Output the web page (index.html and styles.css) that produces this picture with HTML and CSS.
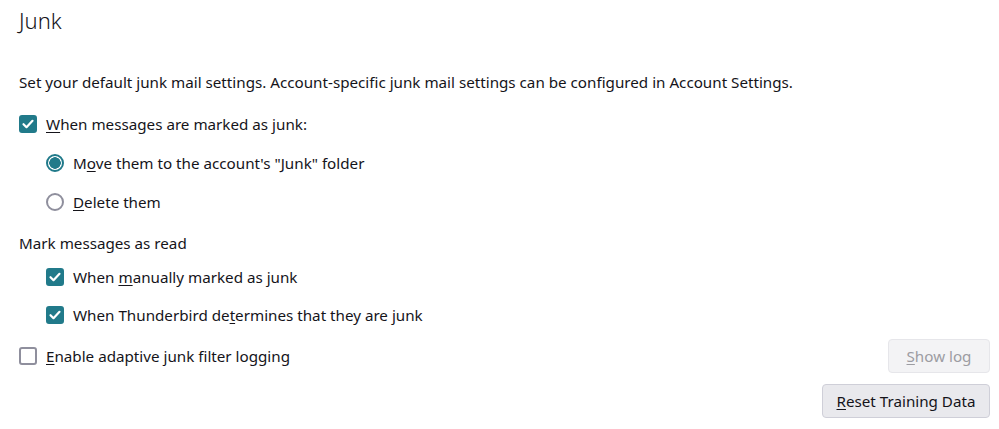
FILE: index.html
```html
<!DOCTYPE html>
<html>
<head>
<meta charset="utf-8">
<link rel="stylesheet" href="styles.css">
</head>
<body>
<div class="page">
  <h1 class="title">Junk</h1>
  <p class="desc">Set your default junk mail settings. Account-specific junk mail settings can be configured in Account Settings.</p>

  <div class="row first">
    <span class="cb checked"><svg viewBox="0 0 18 18"><path d="M4.5 9.2l3 3 6-6.4" /></svg></span>
    <span class="label"><u>W</u>hen messages are marked as junk:</span>
  </div>
  <div class="indent radios">
    <div class="row">
      <span class="radio checked"></span>
      <span class="label">M<u>o</u>ve them to the account's "Junk" folder</span>
    </div>
    <div class="row">
      <span class="radio"></span>
      <span class="label"><u>D</u>elete them</span>
    </div>
  </div>

  <div class="caption">Mark messages as read</div>
  <div class="indent">
    <div class="row">
      <span class="cb checked"><svg viewBox="0 0 18 18"><path d="M4.5 9.2l3 3 6-6.4" /></svg></span>
      <span class="label">When <u>m</u>anually marked as junk</span>
    </div>
    <div class="row">
      <span class="cb checked"><svg viewBox="0 0 18 18"><path d="M4.5 9.2l3 3 6-6.4" /></svg></span>
      <span class="label">When Thunderbird de<u>t</u>ermines that they are junk</span>
    </div>
  </div>

  <div class="row logrow">
    <span class="cb"></span>
    <span class="label"><u>E</u>nable adaptive junk filter logging</span>
    <button class="btn disabled"><u>S</u>how log</button>
  </div>
  <div class="btnrow">
    <button class="btn"><u>R</u>eset Training Data</button>
  </div>
</div>
</body>
</html>
```

FILE: styles.css
```css
html, body {
  margin: 0;
  padding: 0;
  background: #ffffff;
}
body {
  font-family: "Noto Sans", "Open Sans", sans-serif;
  font-size: 15.2px;
  color: #15141a;
}
.page {
  padding: 4px 9px 0 19px;
}
.title {
  margin: 0;
  font-size: 22px;
  font-weight: 300;
  line-height: 32px;
  color: #15141a;
}
.desc {
  margin: 35px 0 0 0;
  line-height: 22px;
}
.row {
  display: flex;
  align-items: center;
  height: 38px;
}
.row.first {
  margin-top: 12px;
}
.indent {
  padding-left: 27px;
}
.radios {
  margin-top: 1px;
}
.indent .row + .row {
  margin-top: 0.5px;
}
u {
  text-decoration-thickness: 1px;
  text-underline-offset: 2px;
}
.cb {
  box-sizing: border-box;
  width: 18px;
  height: 18px;
  border: 2px solid #8f8f9d;
  border-radius: 3px;
  margin-right: 9px;
  flex: none;
  display: flex;
  align-items: center;
  justify-content: center;
}
.cb.checked {
  background: #217a8a;
  border-color: #217a8a;
}
.cb svg {
  width: 18px;
  height: 18px;
  flex: none;
}
.cb svg path {
  fill: none;
  stroke: #ffffff;
  stroke-width: 2.2;
  stroke-linecap: round;
  stroke-linejoin: round;
}
.radio {
  box-sizing: border-box;
  width: 18px;
  height: 18px;
  border: 2px solid #8f8f9d;
  border-radius: 50%;
  margin-right: 9px;
  flex: none;
}
.radio.checked {
  border-color: #217a8a;
  background: radial-gradient(circle, #217a8a 0 5.5px, #ffffff 6px);
}
.caption {
  margin-top: 7px;
  line-height: 30px;
}
.logrow {
  margin-top: 3px;
}
.logrow .btn {
  margin-left: auto;
}
.btn {
  font-family: inherit;
  font-size: 15.2px;
  color: #15141a;
  background: #e9e9ed;
  border: 1px solid #cfcfd8;
  border-radius: 4px;
  height: 34px;
  padding: 0 12px;
}
.btn.disabled {
  color: #9c9ca2;
  background: #f3f3f5;
  border-color: #e6e6ea;
  width: 102px;
}
.btnrow {
  display: flex;
  justify-content: flex-end;
  margin-top: 9px;
}
.btnrow .btn {
  width: 168px;
}
```
